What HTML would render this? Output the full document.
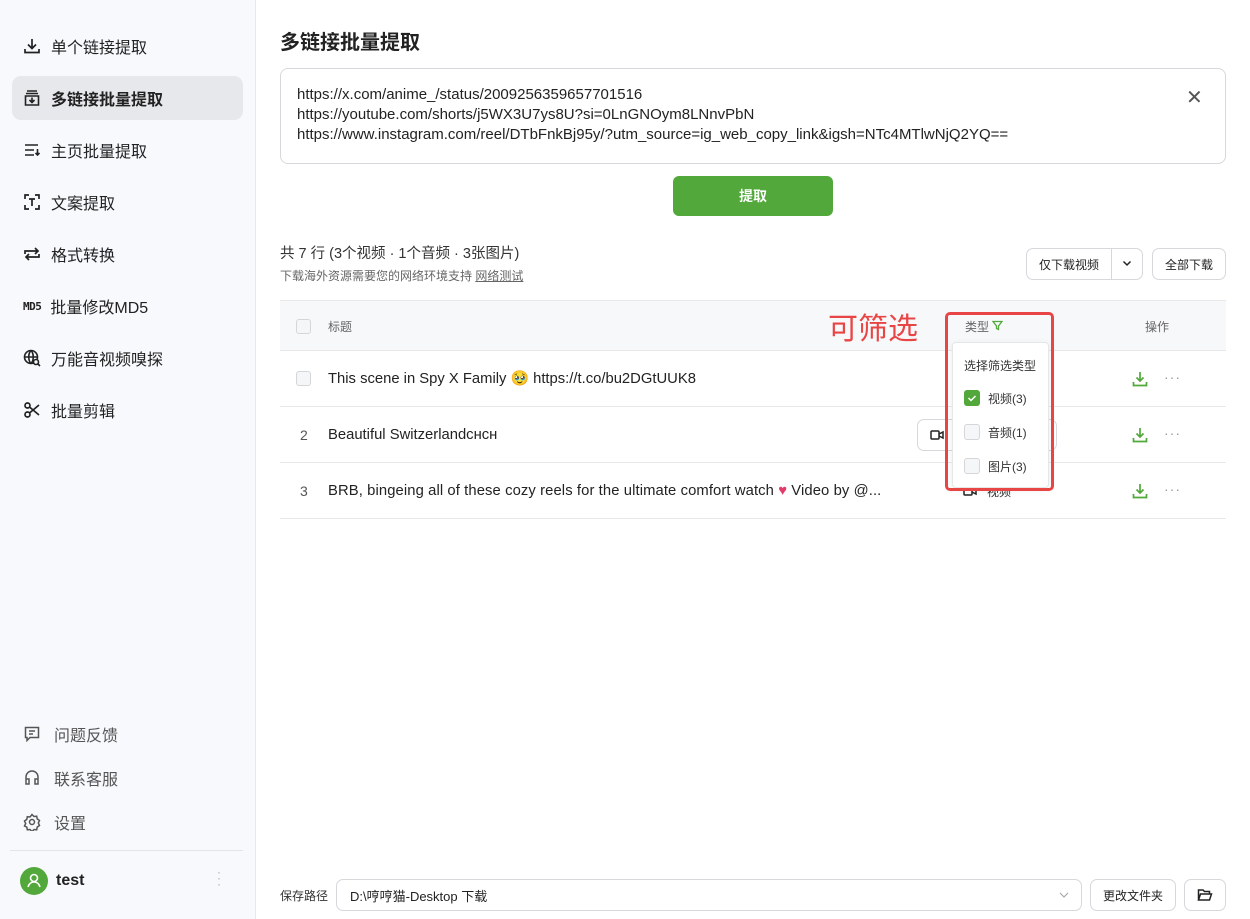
<!DOCTYPE html>
<html><head><meta charset="utf-8"><style>
*{box-sizing:border-box;margin:0;padding:0}
body{width:1250px;height:919px;overflow:hidden;background:#fff;font-family:"Liberation Sans","Noto Sans CJK SC",sans-serif;color:#222;position:relative}
.side{position:absolute;left:0;top:0;width:256px;height:919px;background:#f7f9fc;border-right:1px solid #e6e8ec}
.nav{position:absolute;left:12px;width:231px;height:44px;border-radius:9px;display:flex;align-items:center;padding-left:11px;font-size:16px;color:#222}
.nav svg{width:18px;height:18px;margin-right:10px;flex:none}
.nav.act{background:#e6e8ec;font-weight:bold}
.bot{position:absolute;left:12px;display:flex;align-items:center;padding-left:11px;font-size:16px;color:#555}
.bot svg{width:18px;height:18px;margin-right:13px}
.ab{position:absolute}
.btn{position:absolute;border:1px solid #d6d8dc;border-radius:7px;background:#fff;font-size:12px;display:flex;align-items:center;justify-content:center;color:#222}
.cb{position:absolute;width:15px;height:15px;border:1px solid #d4d6da;border-radius:3px;background:#f5f6f8}
.row{position:absolute;left:280px;width:946px;height:56px;border-bottom:1px solid #e8e8e8}
.t{position:absolute;left:48px;top:19px;height:18px;line-height:18px;font-size:14.8px;color:#222;white-space:nowrap}
.dl{position:absolute;left:852px;top:20px}
.dots{position:absolute;left:884px;top:18px;color:#999;font-size:14px;letter-spacing:1px}
</style></head><body>
<div class="side">
 <div class="nav" style="top:24px"><svg viewBox="0 0 18 18" fill="none" stroke="#222" stroke-width="1.7"><path d="M9 2v9M5 7.5l4 4 4-4M2 12v3.5h14V12"/></svg>单个链接提取</div>
 <div class="nav act" style="top:76px"><svg viewBox="0 0 18 18" fill="none" stroke="#222" stroke-width="1.6"><path d="M4 2h10M3 4.5h12M2.5 7h13v9h-13zM9 8.5v5M6.5 11l2.5 2.5 2.5-2.5"/></svg>多链接批量提取</div>
 <div class="nav" style="top:128px"><svg viewBox="0 0 18 18" fill="none" stroke="#222" stroke-width="1.6"><path d="M2 4h13M2 9h9M2 14h9M14.5 8v6M12.5 12l2 2 2-2"/></svg>主页批量提取</div>
 <div class="nav" style="top:180px"><svg viewBox="0 0 18 18" fill="none" stroke="#222" stroke-width="1.7"><path d="M2 6V2h4M12 2h4v4M16 12v4h-4M6 16H2v-4M6 6h6M9 6v7"/></svg>文案提取</div>
 <div class="nav" style="top:232px"><svg viewBox="0 0 18 18" fill="none" stroke="#222" stroke-width="1.7"><path d="M2 9V6h13M12 3l3 3-3 3M16 9v3H3M6 15l-3-3 3-3"/></svg>格式转换</div>
 <div class="nav" style="top:284px"><span style="font-size:11px;font-weight:bold;margin-right:9px;font-family:'DejaVu Sans Mono',monospace;letter-spacing:-0.5px">MD5</span>批量修改MD5</div>
 <div class="nav" style="top:336px"><svg viewBox="0 0 18 18" fill="none" stroke="#222" stroke-width="1.6"><circle cx="8" cy="8" r="6.5"/><path d="M1.5 8h13M8 1.5c-3 3-3 10 0 13M8 1.5c3 3 3 10 0 13"/><circle cx="13" cy="13" r="2.5" fill="#f7f9fc"/><path d="M15 15l2 2"/></svg>万能音视频嗅探</div>
 <div class="nav" style="top:388px"><svg viewBox="0 0 18 18" fill="none" stroke="#222" stroke-width="1.7"><circle cx="4.5" cy="4.5" r="2.5"/><circle cx="4.5" cy="13.5" r="2.5"/><path d="M6.5 6L16 14M6.5 12L16 4"/></svg>批量剪辑</div>
 <div class="bot" style="top:722px"><svg viewBox="0 0 18 18" fill="none" stroke="#555" stroke-width="1.5"><path d="M2.5 2.5h13v10H7l-3 3v-3H2.5z M6 6h6M6 9h4"/></svg>问题反馈</div>
 <div class="bot" style="top:766px"><svg viewBox="0 0 18 18" fill="none" stroke="#555" stroke-width="1.5"><path d="M3 11V8a6 6 0 0112 0v3M3 10h3v5H3zM12 10h3v5h-3z"/></svg>联系客服</div>
 <div class="bot" style="top:810px"><svg viewBox="0 0 18 18" fill="none" stroke="#555" stroke-width="1.5"><circle cx="9" cy="9" r="2.5"/><path d="M9 1.5l2 2 2.7-.3.5 2.7 2.3 1.6-1.2 2.5 1.2 2.5-2.3 1.6-.5 2.7-2.7-.3-2 2-2-2-2.7.3-.5-2.7L1.5 13l1.2-2.5L1.5 8l2.3-1.6.5-2.7 2.7.3z"/></svg>设置</div>
 <div class="ab" style="left:10px;top:850px;width:233px;border-top:1px solid #e2e4e8"></div>
 <div class="ab" style="left:20px;top:867px;width:28px;height:28px;border-radius:50%;background:#52a83a"><svg viewBox="0 0 28 28" width="28" height="28" fill="none" stroke="#fff" stroke-width="1.6"><circle cx="14" cy="11" r="3.5"/><path d="M8 20c1-3.5 3-5 6-5s5 1.5 6 5"/></svg></div>
 <div class="ab" style="left:56px;top:872px;font-size:16px;font-weight:bold">test</div>
 <div class="ab" style="left:217px;top:869px;color:#aaa;font-size:12px;line-height:6px">·<br>·<br>·</div>
</div>

<div class="ab" style="left:280px;top:26px;font-size:20px;font-weight:bold">多链接批量提取</div>
<div class="ab" style="left:280px;top:68px;width:946px;height:96px;border:1px solid #d6d8dc;border-radius:8px;padding:16px 16px;font-size:15px;line-height:20px;color:#222">https://x.com/anime_/status/2009256359657701516<br>https://youtube.com/shorts/j5WX3U7ys8U?si=0LnGNOym8LNnvPbN<br>https://www.instagram.com/reel/DTbFnkBj95y/?utm_source=ig_web_copy_link&amp;igsh=NTc4MTlwNjQ2YQ==</div>
<div class="ab" style="left:1186px;top:88px;font-size:20px;color:#555;line-height:20px">✕</div>
<div class="ab" style="left:673px;top:176px;width:160px;height:40px;border-radius:6px;background:#52a83a;color:#fff;font-size:14px;font-weight:bold;display:flex;align-items:center;justify-content:center">提取</div>

<div class="ab" style="left:280px;top:242px;font-size:14.5px;color:#333">共 7 行 (3个视频 · 1个音频 · 3张图片)</div>
<div class="ab" style="left:280px;top:267px;font-size:12px;color:#666">下载海外资源需要您的网络环境支持 <u>网络测试</u></div>
<div class="btn" style="left:1026px;top:248px;width:117px;height:32px;justify-content:flex-start;padding-left:12px">仅下载视频</div>
<div class="ab" style="left:1111px;top:249px;width:1px;height:30px;background:#d6d8dc"></div>
<div class="ab" style="left:1121px;top:256px"><svg width="12" height="12" viewBox="0 0 12 12" fill="none" stroke="#222" stroke-width="1.5"><path d="M2.5 4.5L6 8l3.5-3.5"/></svg></div>
<div class="btn" style="left:1152px;top:248px;width:74px;height:32px">全部下载</div>

<div class="row" style="top:300px;height:51px;background:#f7f8fa;border-top:1px solid #e8e8e8">
 <div class="cb" style="left:16px;top:18px"></div>
 <div class="ab" style="left:48px;top:17px;font-size:12px;color:#666">标题</div>
 <div class="ab" style="left:865px;top:17px;font-size:12px;color:#666">操作</div>
</div>
<div class="row" style="top:351px">
 <div class="cb" style="left:16px;top:20px"></div>
 <div class="t">This scene in Spy X Family 🥹 https://t.co/bu2DGtUUK8</div>
 <svg class="dl" width="16" height="16" viewBox="0 0 16 16" fill="none" stroke="#52a83a" stroke-width="1.7"><path d="M8 1v9M4.5 6.5L8 10l3.5-3.5M1.5 11v3.5h13V11"/></svg><div class="dots">···</div>
</div>
<div class="row" style="top:407px">
 <div class="ab" style="left:20px;top:20px;font-size:14px;color:#555">2</div>
 <div class="t">Beautiful Switzerlandcнcн</div>
 <div class="btn" style="left:637px;top:12px;width:140px;height:32px"></div>
 <svg class="ab" style="left:650px;top:22px" width="14" height="12" viewBox="0 0 14 12" fill="none" stroke="#222" stroke-width="1.5"><rect x="1" y="2" width="8" height="8" rx="1"/><path d="M9 5l4-2v6l-4-2"/></svg>
 <svg class="dl" width="16" height="16" viewBox="0 0 16 16" fill="none" stroke="#52a83a" stroke-width="1.7"><path d="M8 1v9M4.5 6.5L8 10l3.5-3.5M1.5 11v3.5h13V11"/></svg><div class="dots">···</div>
</div>
<div class="row" style="top:463px">
 <div class="ab" style="left:20px;top:20px;font-size:14px;color:#555">3</div>
 <div class="t" style="letter-spacing:0.1px">BRB, bingeing all of these cozy reels for the ultimate comfort watch <span style="color:#e33a6a">♥</span> Video by @...</div>
 <svg class="ab" style="left:683px;top:22px" width="14" height="12" viewBox="0 0 14 12" fill="none" stroke="#222" stroke-width="1.5"><rect x="1" y="2" width="8" height="8" rx="1"/><path d="M9 5l4-2v6l-4-2"/></svg>
 <div class="ab" style="left:707px;top:20px;font-size:12px;color:#333">视频</div>
 <svg class="dl" width="16" height="16" viewBox="0 0 16 16" fill="none" stroke="#52a83a" stroke-width="1.7"><path d="M8 1v9M4.5 6.5L8 10l3.5-3.5M1.5 11v3.5h13V11"/></svg><div class="dots">···</div>
</div>

<div class="ab" style="left:828px;top:306px;font-size:30px;color:#e84545;font-family:'Noto Sans CJK SC',sans-serif;line-height:40px">可筛选</div>
<div class="ab" style="left:965px;top:318px;font-size:12px;color:#666">类型 <svg width="11" height="11" viewBox="0 0 11 11" fill="none" stroke="#52a83a" stroke-width="1.3"><path d="M1 1.5h9L6.5 6v3.5L4.5 8.5V6z"/></svg></div>
<div class="ab" style="left:952px;top:342px;width:97px;height:146px;background:#fff;border:1px solid #e4e6e8;border-radius:4px;box-shadow:0 2px 8px rgba(0,0,0,.08)">
 <div class="ab" style="left:11px;top:14px;font-size:12px;color:#333;white-space:nowrap">选择筛选类型</div>
 <div class="ab" style="left:11px;top:47px;width:16px;height:16px;border-radius:3px;background:#52a83a"><svg width="16" height="16" viewBox="0 0 16 16" fill="none" stroke="#fff" stroke-width="1.5"><path d="M4.5 8l2.5 2.5 4.5-4.5"/></svg></div>
 <div class="ab" style="left:35px;top:47px;font-size:12px;color:#333">视频(3)</div>
 <div class="cb" style="left:11px;top:81px;width:16px;height:16px"></div>
 <div class="ab" style="left:35px;top:81px;font-size:12px;color:#333">音频(1)</div>
 <div class="cb" style="left:11px;top:115px;width:16px;height:16px"></div>
 <div class="ab" style="left:35px;top:115px;font-size:12px;color:#333">图片(3)</div>
</div>
<div class="ab" style="left:945px;top:312px;width:109px;height:179px;border:3px solid #e84545;border-radius:5px"></div>

<div class="ab" style="left:280px;top:887px;font-size:12px;color:#333">保存路径</div>
<div class="btn" style="left:336px;top:879px;width:746px;height:32px;justify-content:flex-start;padding-left:13px;font-size:13px">D:\哼哼猫-Desktop 下载</div>
<svg class="ab" style="left:1058px;top:889px" width="12" height="12" viewBox="0 0 12 12" fill="none" stroke="#aaa" stroke-width="1.2"><path d="M2 4l4 4 4-4"/></svg>
<div class="btn" style="left:1090px;top:879px;width:86px;height:32px">更改文件夹</div>
<div class="btn" style="left:1184px;top:879px;width:42px;height:32px"><svg width="16" height="14" viewBox="0 0 16 14" fill="none" stroke="#222" stroke-width="1.5"><path d="M1.5 12V2h4.5l1.5 1.5h5v2.5M1.5 12l2-6h11l-2 6z"/></svg></div>
</body></html>
